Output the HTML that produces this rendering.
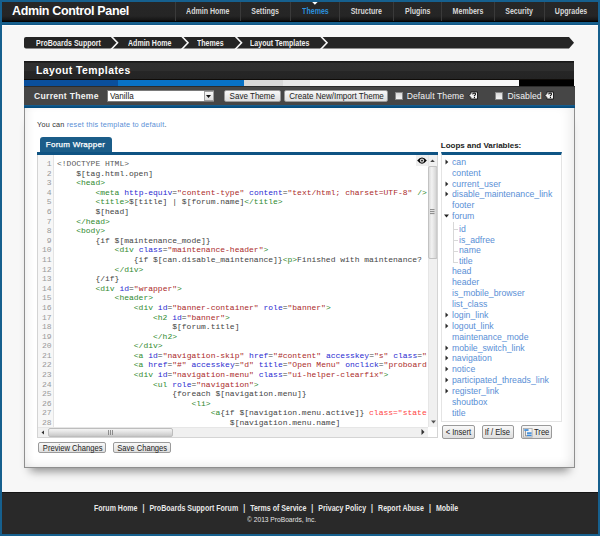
<!DOCTYPE html>
<html><head><meta charset="utf-8">
<style>
*{box-sizing:border-box;margin:0;padding:0}
html,body{width:600px;height:536px;overflow:hidden;background:#16608e}
body{position:relative;font-family:"Liberation Sans",sans-serif}
.a{position:absolute}
#page{position:absolute;left:2px;top:2px;width:596px;height:532px;background:#f7f7f7}
#hdr{position:absolute;left:2px;top:2px;width:596px;height:20px;background:linear-gradient(#272727 0,#252525 14px,#181818 17.5px,#080808 19px);border-bottom:1px solid #030303}
#title{position:absolute;left:10px;top:1.5px;color:#fff;font-weight:bold;font-size:12.5px;letter-spacing:-0.35px;line-height:14px;white-space:nowrap}
.nav{position:absolute;top:0;height:19px;border-left:1px solid #3a3a3a;color:#d8d8d8;font-weight:bold;font-size:8.7px;line-height:19px;text-align:center;white-space:nowrap}
.nav span{display:inline-block;transform:scaleX(0.81)}
.nav.on{color:#2b8fdc}
#foot{position:absolute;left:2px;top:491.5px;width:596px;height:42.5px;background:#292929;border-top:1px solid #151515}
.fl{position:absolute;left:94px;top:503.5px;color:#e8e8e8;font-weight:bold;font-size:8.7px;line-height:9px;white-space:nowrap;transform:scaleX(0.81);transform-origin:0 0}
.fl i{font-style:normal;margin:0 6.2px}
.cp{position:absolute;left:246.5px;top:515.3px;color:#e4e4e4;font-size:7.6px;line-height:9px;white-space:nowrap;transform:scaleX(0.875);transform-origin:0 0}
.bc{position:absolute;top:37.5px;height:11.5px;color:#f0f0f0;font-weight:bold;font-size:8.7px;line-height:11.5px;white-space:nowrap;transform:scaleX(0.81);transform-origin:0 0}
#ptitle{position:absolute;left:24px;top:61px;width:550px;height:19px;background:linear-gradient(#161616 0,#1c1c1c 1.3px,#2f2f2f 2px,#2e2e2e 9.5px,#262626 10.5px,#242424 18px);border-bottom:1px solid #0e0b08}
#ptitle span{position:absolute;left:12px;top:4px;color:#fff;font-weight:bold;font-size:10.4px;letter-spacing:0.45px;line-height:12px;white-space:nowrap}
#tbar{position:absolute;left:24px;top:86.3px;width:551px;height:22.2px;background:linear-gradient(#2c2c2c 0,#2c2c2c 1.4px,#464646 1.5px,#464646 18.6px,#1d6494 19px,#0d5283 20px,#004a7c 22.2px)}
#content{position:absolute;left:24px;top:108px;width:551px;height:359.5px;background:#fff;border:1px solid #8f8f8f;border-top:none;box-shadow:inset 7px 0 10px -5px rgba(0,0,0,0.07),inset -9px 0 12px -5px rgba(0,0,0,0.08),inset 0 -8px 12px -6px rgba(0,0,0,0.06),0 9px 9px -6px rgba(0,0,0,0.45)}
.tl{position:absolute;color:#f2f2f2;font-weight:bold;font-size:8.6px;letter-spacing:0.28px;line-height:10px;white-space:nowrap}
.btn{position:absolute;border:1px solid #9a9a9a;border-radius:2px;background:linear-gradient(#f8f8f8,#dedede);color:#222;font-size:8.6px;line-height:10px;text-align:center;white-space:nowrap}
.btn span{display:inline-block;transform:scaleX(0.885)}
.cb{position:absolute;width:8px;height:8px;border:1px solid #888;background:linear-gradient(#d8d8d8,#f4f4f4)}
.help{position:absolute;width:8px;height:7px;background:#eee;border-radius:1px}

pre{font-family:"Liberation Mono",monospace;font-size:8px;line-height:9.6px;white-space:pre}
#gut{color:#999}
#code b{font-weight:normal}
.t{color:#2f8a2f}.at{color:#2a2ad0}.s{color:#ab2a2a}.m{color:#5a5a5a}.p{color:#444}.e{color:#f44}
.li{position:absolute;font-size:9.15px;letter-spacing:0;line-height:11px;color:#5a8fd6;white-space:nowrap;transform:scaleX(0.955);transform-origin:0 0}
</style></head><body>
<div id="page"></div>
<div id="hdr">
  <div id="title">Admin Control Panel</div>
  <div class="nav" style="left:173px;width:65px"><span>Admin Home</span></div>
  <div class="nav" style="left:238px;width:50px"><span>Settings</span></div>
  <div class="nav on" style="left:288px;width:49px"><span>Themes</span></div>
  <div class="nav" style="left:337px;width:54px"><span>Structure</span></div>
  <div class="nav" style="left:391px;width:48px"><span>Plugins</span></div>
  <div class="nav" style="left:439px;width:53px"><span>Members</span></div>
  <div class="nav" style="left:492px;width:50px"><span>Security</span></div>
  <div class="nav" style="left:542px;width:54px"><span>Upgrades</span></div>
  <svg class="a" style="left:310px;top:0" width="6" height="3"><path d="M0.2 0H5.6L2.9 2.8Z" fill="#fff"/></svg>
</div>
<div class="a" style="left:2px;top:22px;width:596px;height:3px;background:linear-gradient(#16608e 60%,#0e5282)"></div><div class="a" style="left:2px;top:25px;width:596px;height:1px;background:#fff"></div>

<svg class="a" style="left:24px;top:37px" width="552" height="12">
  <path d="M2 0H545L550 5.75L545 11.5H2Q0 11.5 0 9.5V2Q0 0 2 0Z" fill="#252525"/>
  <path d="M87 -1L93.5 5.75L87 12.5M157.5 -1L164 5.75L157.5 12.5M211 -1L217.5 5.75L211 12.5M296.5 -1L303 5.75L296.5 12.5" stroke="#f7f7f7" stroke-width="1.6" fill="none"/>
</svg>
<div class="bc" style="left:35.7px">ProBoards Support</div>
<div class="bc" style="left:127.7px">Admin Home</div>
<div class="bc" style="left:196.5px">Themes</div>
<div class="bc" style="left:249.8px">Layout Templates</div>

<div id="content"></div>
<div id="ptitle"><span>Layout Templates</span></div>
<div class="a" style="left:24px;top:80px;width:550px;height:6.3px;background:#000">
  <div class="a" style="left:0;top:0;width:94px;height:6.3px;background:#0a4f9c"></div>
  <div class="a" style="left:94px;top:0;width:126px;height:6.3px;background:#0872c6"></div>
  <div class="a" style="left:220px;top:0;width:39px;height:6.3px;background:#d8d8d8"></div>
  <div class="a" style="left:259px;top:0;width:27px;height:6.3px;background:#e6e6e6"></div>
  <div class="a" style="left:286px;top:0;width:209px;height:6.3px;background:#f8f8f8"></div>
</div>
<div id="tbar"></div>
<div class="tl" style="left:34px;top:91px">Current Theme</div>
<div class="a" style="left:107px;top:90px;width:107.3px;height:12px;background:#fff;border:1px solid #7a7a7a"></div>
<div class="a" style="left:110.4px;top:90px;font-size:9px;line-height:12px;color:#222;transform:scaleX(0.9);transform-origin:0 0">Vanilla</div>
<div class="a" style="left:203.8px;top:90.7px;width:10px;height:10.6px;background:linear-gradient(#f8f8f8,#dcdcdc);border:1px solid #a0a0a0"></div>
<svg class="a" style="left:206.3px;top:94.8px" width="6" height="4"><path d="M0 0H5L2.5 3Z" fill="#111"/></svg>
<div class="btn" style="left:224px;top:90.3px;width:56.5px;height:11.7px"><span style="transform:scaleX(0.935)">Save Theme</span></div>
<div class="btn" style="left:284.4px;top:90.3px;width:104px;height:11.7px"><span style="transform:scaleX(0.935)">Create New/Import Theme</span></div>
<div class="cb" style="left:395px;top:91.5px"></div>
<div class="tl" style="left:406.7px;top:91px;font-weight:normal;font-size:8.6px;letter-spacing:0.1px">Default Theme</div>
<svg class="a" style="left:467.5px;top:90.5px" width="11" height="9"><path d="M1 4.5L2.8 2.6V1H9.5V8H2.8V6.4Z" fill="#f2f2f2" stroke="#151515" stroke-width="0.9"/><path d="M4.6 3.3Q4.8 2 6.2 2Q7.6 2.1 7.5 3.3Q7.4 4.1 6.4 4.6V5.3" fill="none" stroke="#111" stroke-width="1.1"/><rect x="5.9" y="6" width="1.1" height="1.1" fill="#111"/></svg>
<div class="cb" style="left:495px;top:91.5px"></div>
<div class="tl" style="left:507.5px;top:91px;font-weight:normal;font-size:8.6px;letter-spacing:0.1px">Disabled</div>
<svg class="a" style="left:543.5px;top:90.5px" width="11" height="9"><path d="M1 4.5L2.8 2.6V1H9.5V8H2.8V6.4Z" fill="#f2f2f2" stroke="#151515" stroke-width="0.9"/><path d="M4.6 3.3Q4.8 2 6.2 2Q7.6 2.1 7.5 3.3Q7.4 4.1 6.4 4.6V5.3" fill="none" stroke="#111" stroke-width="1.1"/><rect x="5.9" y="6" width="1.1" height="1.1" fill="#111"/></svg>

<!--CONTENT-->
<div class="a" style="left:37px;top:120px;font-size:7.3px;letter-spacing:0.2px;line-height:9px;color:#333;white-space:nowrap">You can <span style="color:#5a8fd6">reset this template to default</span>.</div>
<div class="a" style="left:39.7px;top:137.2px;width:72px;height:16px;background:#1b5d89;border-radius:3px 3px 0 0"></div>
<div class="a" style="left:45.8px;top:139.5px;font-size:8px;letter-spacing:0.27px;line-height:10px;color:#fff;white-space:nowrap;-webkit-text-stroke:0.25px #fff">Forum Wrapper</div>
<div class="a" style="left:36.5px;top:152.2px;width:401px;height:2.8px;background:#0f5383"></div>
<div id="editor" class="a" style="left:36.5px;top:155px;width:401px;height:283px;border:1px solid #d4d4d4;border-top:none;background:#fff;overflow:hidden">
  <div class="a" style="left:0;top:0;width:16px;height:272px;background:#f7f7f7;border-right:1px solid #e4e4e4"></div>
  <pre class="a" id="gut" style="left:0;top:4px;width:14px;text-align:right">1
2
3
4
5
6
7
8
9
10
11
12
13
14
15
16
17
18
19
20
21
22
23
24
25
26
27
28</pre>
  <pre class="a" id="code" style="left:19.5px;top:4px;width:370px;height:270px;overflow:hidden"><b class="m">&lt;!DOCTYPE HTML&gt;</b>
    <b class="p">$[tag.html.open]</b>
    <b class="t">&lt;head&gt;</b>
        <b class="t">&lt;meta</b><b class="p"> </b><b class="at">http-equiv</b><b class="p">=</b><b class="s">"content-type"</b><b class="p"> </b><b class="at">content</b><b class="p">=</b><b class="s">"text/html; charset=UTF-8"</b><b class="p"> </b><b class="t">/&gt;</b>
        <b class="t">&lt;title&gt;</b><b class="p">$[title] | $[forum.name]</b><b class="t">&lt;/title&gt;</b>
        <b class="p">$[head]</b>
    <b class="t">&lt;/head&gt;</b>
    <b class="t">&lt;body&gt;</b>
        <b class="p">{if $[maintenance_mode]}</b>
            <b class="t">&lt;div</b><b class="p"> </b><b class="at">class</b><b class="p">=</b><b class="s">"maintenance-header"</b><b class="t">&gt;</b>
                <b class="p">{if $[can.disable_maintenance]}</b><b class="t">&lt;p&gt;</b><b class="p">Finished with maintenance? </b>
            <b class="t">&lt;/div&gt;</b>
        <b class="p">{/if}</b>
        <b class="t">&lt;div</b><b class="p"> </b><b class="at">id</b><b class="p">=</b><b class="s">"wrapper"</b><b class="t">&gt;</b>
            <b class="t">&lt;header&gt;</b>
                <b class="t">&lt;div</b><b class="p"> </b><b class="at">id</b><b class="p">=</b><b class="s">"banner-container"</b><b class="p"> </b><b class="at">role</b><b class="p">=</b><b class="s">"banner"</b><b class="t">&gt;</b>
                    <b class="t">&lt;h2</b><b class="p"> </b><b class="at">id</b><b class="p">=</b><b class="s">"banner"</b><b class="t">&gt;</b>
                        <b class="p">$[forum.title]</b>
                    <b class="t">&lt;/h2&gt;</b>
                <b class="t">&lt;/div&gt;</b>
                <b class="t">&lt;a</b><b class="p"> </b><b class="at">id</b><b class="p">=</b><b class="s">"navigation-skip"</b><b class="p"> </b><b class="at">href</b><b class="p">=</b><b class="s">"#content"</b><b class="p"> </b><b class="at">accesskey</b><b class="p">=</b><b class="s">"s"</b><b class="p"> </b><b class="at">class</b><b class="p">=</b><b class="s">"ui-helper-hidden"</b>
                <b class="t">&lt;a</b><b class="p"> </b><b class="at">href</b><b class="p">=</b><b class="s">"#"</b><b class="p"> </b><b class="at">accesskey</b><b class="p">=</b><b class="s">"d"</b><b class="p"> </b><b class="at">title</b><b class="p">=</b><b class="s">"Open Menu"</b><b class="p"> </b><b class="at">onclick</b><b class="p">=</b><b class="s">"proboards.menu()"</b>
                <b class="t">&lt;div</b><b class="p"> </b><b class="at">id</b><b class="p">=</b><b class="s">"navigation-menu"</b><b class="p"> </b><b class="at">class</b><b class="p">=</b><b class="s">"ui-helper-clearfix"</b><b class="t">&gt;</b>
                    <b class="t">&lt;ul</b><b class="p"> </b><b class="at">role</b><b class="p">=</b><b class="s">"navigation"</b><b class="t">&gt;</b>
                        <b class="p">{foreach $[navigation.menu]}</b>
                            <b class="t">&lt;li&gt;</b>
                                <b class="t">&lt;a</b><b class="p">{if $[navigation.menu.active]}</b><b class="e"> class="state-active"</b>
                                    <b class="p">$[navigation.menu.name]</b></pre>
  <div class="a" style="left:378.5px;top:0;width:12px;height:11px;background:#eee"></div>
  <svg class="a" style="left:379px;top:1.8px" width="11" height="8"><path d="M0.2 3.6Q5 -2.6 9.8 3.6Q5 9.8 0.2 3.6Z" fill="#000"/><circle cx="5" cy="3.6" r="2.2" fill="#cfcfcf"/><circle cx="5" cy="3.6" r="0.9" fill="#111"/></svg>
  <div class="a" style="left:390.5px;top:0;width:10px;height:272px;background:#f0f0f0;border-left:1px solid #e6e6e6"></div>
  <svg class="a" style="left:392.8px;top:3.7px" width="6" height="4"><path d="M0.2 3H4.8L2.5 0.5Z" fill="#444"/></svg>
  <div class="a" style="left:390.5px;top:11px;width:9.5px;height:92.5px;border:1px solid #c2c2c2;border-radius:2px;background:linear-gradient(90deg,#dcdcdc,#f2f2f2 35%,#dadada 80%,#c6c6c6)"></div>
  <svg class="a" style="left:392.3px;top:53.5px" width="6" height="6"><path d="M0 0.6H4.5M0 2.6H4.5M0 4.6H4.5" stroke="#7a7a7a" stroke-width="0.9"/></svg>
  <svg class="a" style="left:393px;top:265px" width="6" height="4"><path d="M0 0.5H5L2.5 3.5Z" fill="#555"/></svg>
  <div class="a" style="left:0;top:272px;width:390.5px;height:10px;background:#f0f0f0;border-top:1px solid #e6e6e6"></div>
  <svg class="a" style="left:3px;top:274.5px" width="4" height="5"><path d="M3 0.5L0.5 2.5L3 4.5Z" fill="#333"/></svg>
  <div class="a" style="left:10.5px;top:273px;width:125px;height:9px;border:1px solid #bdbdbd;border-radius:2px;background:linear-gradient(#f4f4f4,#e2e2e2 45%,#c8c8c8)"></div>
  <svg class="a" style="left:70.5px;top:275px" width="5" height="5"><path d="M0.5 0V5M2.5 0V5M4.5 0V5" stroke="#777" stroke-width="0.8"/></svg>
  <svg class="a" style="left:383px;top:274px" width="4" height="6"><path d="M0.5 0L3.5 3L0.5 6Z" fill="#333"/></svg>
</div>
<div class="btn" style="left:38.3px;top:441.7px;width:67.7px;height:11.6px"><span>Preview Changes</span></div>
<div class="btn" style="left:113px;top:441.7px;width:57.8px;height:11.6px"><span>Save Changes</span></div>

<div class="a" style="left:440.8px;top:140.5px;font-size:8px;font-weight:bold;line-height:10px;color:#222;white-space:nowrap">Loops and Variables:</div>
<div class="a" style="left:440.8px;top:152px;width:121.2px;height:269.5px;border:1px solid #e4e4e4;border-top:3px solid #0f5585;background:#fff"></div>
<div class="li" style="left:452.1px;top:157.1px">can</div>
<svg class="a" style="left:444.5px;top:159.1px" width="4" height="6"><path d="M0.5 0.6L3.3 3L0.5 5.4Z" fill="#2a2a2a"/></svg>
<div class="li" style="left:452.1px;top:167.9px">content</div>
<div class="li" style="left:452.1px;top:178.7px">current_user</div>
<svg class="a" style="left:444.5px;top:180.7px" width="4" height="6"><path d="M0.5 0.6L3.3 3L0.5 5.4Z" fill="#2a2a2a"/></svg>
<div class="li" style="left:452.1px;top:189.4px">disable_maintenance_link</div>
<svg class="a" style="left:444.5px;top:191.4px" width="4" height="6"><path d="M0.5 0.6L3.3 3L0.5 5.4Z" fill="#2a2a2a"/></svg>
<div class="li" style="left:452.1px;top:200.2px">footer</div>
<div class="li" style="left:452.1px;top:211.0px">forum</div>
<svg class="a" style="left:444px;top:214.0px" width="6" height="4"><path d="M0 0.5H5L2.5 3.5Z" fill="#222"/></svg>
<div class="li" style="left:459.1px;top:223.6px">id</div>
<div class="li" style="left:459.1px;top:234.5px">is_adfree</div>
<div class="li" style="left:459.1px;top:245.4px">name</div>
<div class="li" style="left:459.1px;top:256.3px">title</div>
<div class="li" style="left:452.1px;top:266.3px">head</div>
<div class="li" style="left:452.1px;top:277.2px">header</div>
<div class="li" style="left:452.1px;top:288.1px">is_mobile_browser</div>
<div class="li" style="left:452.1px;top:298.9px">list_class</div>
<div class="li" style="left:452.1px;top:309.8px">login_link</div>
<svg class="a" style="left:444.5px;top:311.8px" width="4" height="6"><path d="M0.5 0.6L3.3 3L0.5 5.4Z" fill="#2a2a2a"/></svg>
<div class="li" style="left:452.1px;top:320.7px">logout_link</div>
<svg class="a" style="left:444.5px;top:322.7px" width="4" height="6"><path d="M0.5 0.6L3.3 3L0.5 5.4Z" fill="#2a2a2a"/></svg>
<div class="li" style="left:452.1px;top:331.6px">maintenance_mode</div>
<div class="li" style="left:452.1px;top:342.5px">mobile_switch_link</div>
<svg class="a" style="left:444.5px;top:344.5px" width="4" height="6"><path d="M0.5 0.6L3.3 3L0.5 5.4Z" fill="#2a2a2a"/></svg>
<div class="li" style="left:452.1px;top:353.3px">navigation</div>
<svg class="a" style="left:444.5px;top:355.3px" width="4" height="6"><path d="M0.5 0.6L3.3 3L0.5 5.4Z" fill="#2a2a2a"/></svg>
<div class="li" style="left:452.1px;top:364.2px">notice</div>
<svg class="a" style="left:444.5px;top:366.2px" width="4" height="6"><path d="M0.5 0.6L3.3 3L0.5 5.4Z" fill="#2a2a2a"/></svg>
<div class="li" style="left:452.1px;top:375.1px">participated_threads_link</div>
<svg class="a" style="left:444.5px;top:377.1px" width="4" height="6"><path d="M0.5 0.6L3.3 3L0.5 5.4Z" fill="#2a2a2a"/></svg>
<div class="li" style="left:452.1px;top:386.0px">register_link</div>
<svg class="a" style="left:444.5px;top:388.0px" width="4" height="6"><path d="M0.5 0.6L3.3 3L0.5 5.4Z" fill="#2a2a2a"/></svg>
<div class="li" style="left:452.1px;top:396.9px">shoutbox</div>
<div class="li" style="left:452.1px;top:407.7px">title</div>
<div class="a" style="left:452.5px;top:221.7px;width:0;height:40.6px;border-left:1px solid #d8d8d8"></div>
<div class="a" style="left:453px;top:229.1px;width:5px;height:0;border-top:1px solid #d8d8d8"></div>
<div class="a" style="left:453px;top:240.0px;width:5px;height:0;border-top:1px solid #d8d8d8"></div>
<div class="a" style="left:453px;top:250.9px;width:5px;height:0;border-top:1px solid #d8d8d8"></div>
<div class="a" style="left:453px;top:261.8px;width:5px;height:0;border-top:1px solid #d8d8d8"></div>
<div class="btn" style="left:442.4px;top:425px;width:32.6px;height:13.6px;line-height:12px"><span>&lt; Insert</span></div>
<div class="btn" style="left:481.6px;top:425px;width:32.4px;height:13.6px;line-height:12px"><span>If / Else</span></div>
<div class="btn" style="left:520.6px;top:425px;width:31.4px;height:13.6px;line-height:12px;text-align:left;padding-left:11.5px"><span>Tree</span></div>
<svg class="a" style="left:522.5px;top:427.5px" width="10" height="10"><rect x="0.5" y="0.5" width="8.6" height="8.6" fill="#f4f4f4" stroke="#a8a8a8" stroke-width="0.8"/><path d="M2.4 2.8V7.8H4.2" stroke="#666" stroke-width="0.7" fill="none"/><rect x="1.3" y="1.2" width="4.2" height="1.7" fill="#3c8ad8"/><rect x="4" y="4.3" width="4.6" height="1.6" fill="#3c8ad8"/><rect x="4" y="6.6" width="4.6" height="1.6" fill="#3c8ad8"/></svg>
<!--/CONTENT-->
<div id="foot"></div>
<div class="fl">Forum Home<i>|</i>ProBoards Support Forum<i>|</i>Terms of Service<i>|</i>Privacy Policy<i>|</i>Report Abuse<i>|</i>Mobile</div>
<div class="cp">© 2013 ProBoards, Inc.</div>
</body></html>
